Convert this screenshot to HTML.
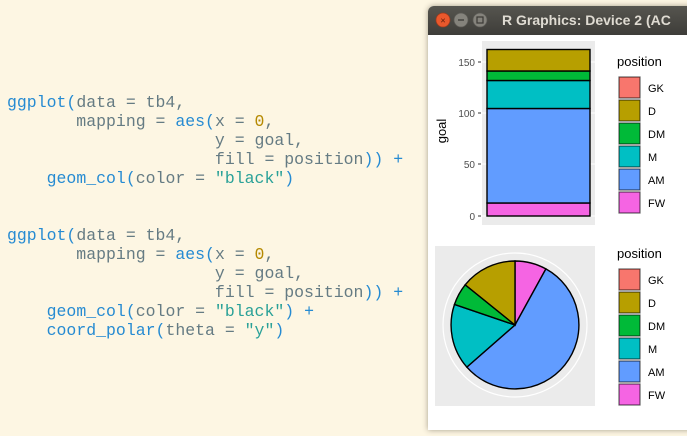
<!DOCTYPE html>
<html><head><style>
body{margin:0;width:687px;height:436px;background:#fdf6e3;position:relative;overflow:hidden;font-family:"Liberation Sans",sans-serif}
pre{position:absolute;left:7px;margin:0;font-family:"Liberation Mono",monospace;font-size:16.5px;line-height:19px;color:#657b83}
.b{color:#268bd2}.o{color:#b58900}.c{color:#2aa198}
#win{position:absolute;left:428px;top:6px;width:270px;height:424px;background:#fff;border-radius:6px 6px 0 0;box-shadow:0 0 6px rgba(60,50,30,.45)}
#tb{height:29px;background:linear-gradient(#56554f,#3e3d39);border-radius:6px 6px 0 0;color:#dfdbd2;font-weight:bold;font-size:14px;line-height:29px;padding-left:74px;white-space:nowrap}
</style></head><body>
<pre style="top:93px"><span class="b">ggplot(</span>data = tb4,
       mapping = <span class="b">aes(</span>x = <span class="o">0</span>,
                     y = goal,
                     fill = position<span class="b">))</span> <span class="b">+</span>
    <span class="b">geom_col(</span>color = <span class="c">"black"</span><span class="b">)</span></pre>
<pre style="top:226px"><span class="b">ggplot(</span>data = tb4,
       mapping = <span class="b">aes(</span>x = <span class="o">0</span>,
                     y = goal,
                     fill = position<span class="b">))</span> <span class="b">+</span>
    <span class="b">geom_col(</span>color = <span class="c">"black"</span><span class="b">)</span> <span class="b">+</span>
    <span class="b">coord_polar(</span>theta = <span class="c">"y"</span><span class="b">)</span></pre>
<div id="win"><div id="tb">R Graphics: Device 2 (AC</div></div>
<svg style="position:absolute;left:0;top:0" width="687" height="436" font-family="Liberation Sans, sans-serif">
<circle cx="443" cy="20" r="7" fill="#e9582c" stroke="#9e3a1c" stroke-width="0.7"/>
<text x="443" y="23.5" font-size="9" fill="#5a1a08" text-anchor="middle">×</text>
<circle cx="461" cy="20" r="7" fill="#85837c" stroke="#5a5954" stroke-width="0.7"/>
<line x1="458" y1="20" x2="464" y2="20" stroke="#3a3935" stroke-width="1.3"/>
<circle cx="480" cy="20" r="7" fill="#85837c" stroke="#5a5954" stroke-width="0.7"/>
<rect x="477" y="17" width="6" height="6" fill="none" stroke="#3a3935" stroke-width="1.2"/>
<!-- bar chart -->
<rect x="482" y="41" width="113" height="184" fill="#ebebeb"/>
<g stroke="#fff" stroke-width="1"><line x1="482" y1="62" x2="595" y2="62"/><line x1="482" y1="113" x2="595" y2="113"/><line x1="482" y1="164" x2="595" y2="164"/><line x1="482" y1="216" x2="595" y2="216"/></g>
<g stroke="#000" stroke-width="1.4">
<rect x="487" y="203" width="103" height="13" fill="#f564e3"/>
<rect x="487" y="108.5" width="103" height="94.5" fill="#619cff"/>
<rect x="487" y="80.5" width="103" height="28" fill="#00bfc4"/>
<rect x="487" y="71" width="103" height="9.5" fill="#00ba38"/>
<rect x="487" y="49.5" width="103" height="21.5" fill="#b79f00"/>
</g>
<g font-size="10" fill="#4d4d4d" text-anchor="end"><text x="475" y="66">150</text><text x="475" y="117">100</text><text x="475" y="168">50</text><text x="475" y="220">0</text></g>
<g stroke="#333"><line x1="478" y1="62" x2="481" y2="62"/><line x1="478" y1="113" x2="481" y2="113"/><line x1="478" y1="164" x2="481" y2="164"/><line x1="478" y1="216" x2="481" y2="216"/></g>
<text transform="translate(446,131) rotate(-90)" font-size="13" text-anchor="middle">goal</text>
<g font-size="13"><text x="617" y="66">position</text><text x="617" y="258">position</text></g>
<g stroke="#000" stroke-width="1.2" stroke-opacity="0.6">
<rect x="619" y="77" width="21" height="21" fill="#f8766d"/><rect x="619" y="100" width="21" height="21" fill="#b79f00"/><rect x="619" y="123" width="21" height="21" fill="#00ba38"/><rect x="619" y="146" width="21" height="21" fill="#00bfc4"/><rect x="619" y="169" width="21" height="21" fill="#619cff"/><rect x="619" y="192" width="21" height="21" fill="#f564e3"/>
<rect x="619" y="269" width="21" height="21" fill="#f8766d"/><rect x="619" y="292" width="21" height="21" fill="#b79f00"/><rect x="619" y="315" width="21" height="21" fill="#00ba38"/><rect x="619" y="338" width="21" height="21" fill="#00bfc4"/><rect x="619" y="361" width="21" height="21" fill="#619cff"/><rect x="619" y="384" width="21" height="21" fill="#f564e3"/>
</g>
<g font-size="11"><text x="648" y="92">GK</text><text x="648" y="115">D</text><text x="648" y="138">DM</text><text x="648" y="161">M</text><text x="648" y="184">AM</text><text x="648" y="207">FW</text>
<text x="648" y="284">GK</text><text x="648" y="307">D</text><text x="648" y="330">DM</text><text x="648" y="353">M</text><text x="648" y="376">AM</text><text x="648" y="399">FW</text></g>
<!-- pie -->
<rect x="435" y="246" width="160" height="160" fill="#ebebeb"/>
<circle cx="515" cy="325" r="72" fill="none" stroke="#fff" stroke-width="1.2"/>
<g stroke="#000" stroke-width="1.4">
<path d="M515,325 L515,261 A64,64 0 0 1 545.9,268.9 Z" fill="#f564e3"/>
<path d="M515,325 L545.9,268.9 A64,64 0 1 1 466.8,367.1 Z" fill="#619cff"/>
<path d="M515,325 L466.8,367.1 A64,64 0 0 1 454.5,304.4 Z" fill="#00bfc4"/>
<path d="M515,325 L454.5,304.4 A64,64 0 0 1 465.2,284.8 Z" fill="#00ba38"/>
<path d="M515,325 L465.2,284.8 A64,64 0 0 1 515,261 Z" fill="#b79f00"/>
</g>
</svg>
</body></html>
